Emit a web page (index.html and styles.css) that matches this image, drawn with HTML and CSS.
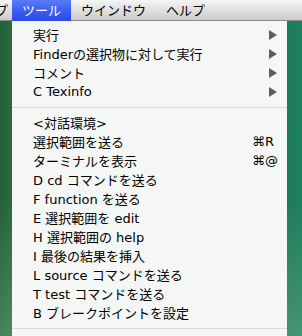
FILE: index.html
```html
<!DOCTYPE html>
<html lang="ja">
<head>
<meta charset="UTF-8">
<title>ツール</title>
<link rel="stylesheet" href="styles.css">
</head>
<body>
<div class="menubar">
  <span class="bar-item cut">プ</span>
  <span class="bar-item active">ツール</span>
  <span class="bar-item">ウインドウ</span>
  <span class="bar-item">ヘルプ</span>
</div>

<div class="menu">
  <div class="row"><span class="label">実行</span><span class="arrow"></span></div>
  <div class="row"><span class="label">Finderの選択物に対して実行</span><span class="arrow"></span></div>
  <div class="row"><span class="label">コメント</span><span class="arrow"></span></div>
  <div class="row"><span class="label">C Texinfo</span><span class="arrow"></span></div>
  <div class="sep"></div>
  <div class="row"><span class="label">&lt;対話環境&gt;</span></div>
  <div class="row"><span class="label">選択範囲を送る</span><span class="key">⌘R</span></div>
  <div class="row"><span class="label">ターミナルを表示</span><span class="key">⌘@</span></div>
  <div class="row"><span class="label">D cd コマンドを送る</span></div>
  <div class="row"><span class="label">F function を送る</span></div>
  <div class="row"><span class="label">E 選択範囲を edit</span></div>
  <div class="row"><span class="label">H 選択範囲の help</span></div>
  <div class="row"><span class="label">I 最後の結果を挿入</span></div>
  <div class="row"><span class="label">L source コマンドを送る</span></div>
  <div class="row"><span class="label">T test コマンドを送る</span></div>
  <div class="row"><span class="label">B ブレークポイントを設定</span></div>
  <div class="sep"></div>
</div>
</body>
</html>
```

FILE: styles.css
```css
html, body {margin: 0; padding: 0;}
body {
  width: 302px; height: 336px; overflow: hidden;
  font: 13px "DejaVu Sans", "Noto Sans CJK JP", sans-serif;
  color: #000;
  background: linear-gradient(to bottom, rgba(255,255,255,0) 60%, rgba(140,190,150,0.35) 100%),
              linear-gradient(to right, #24603a 0, #2b6a40 12px, #1c7a5a 280px, #1f7f5e 302px);
}

.menubar {
  display: flex; height: 21px; align-items: center;
  background: linear-gradient(to bottom, #f5f5f5, #dcdcdc 60%, #cbcbcb);
  border-bottom: 1px solid #8a8a8a;
  box-sizing: border-box;
  font-size: 13px;
}
.bar-item {padding: 0 10px; height: 21px; line-height: 21px; white-space: nowrap;}
.bar-item.cut {padding: 0; width: 12px; overflow: hidden; text-indent: -5px;}
.bar-item.active {
  color: #fff;
  background: linear-gradient(to bottom, #5a7cf8, #3a5ef2 50%, #2a4ce8);
}

.menu {
  margin-left: 12px; width: 275px;
  padding-top: 4px;
  background: #f4f7f6;
  height: 315px;
  box-sizing: border-box;
}
.row {
  display: flex; align-items: center;
  height: 19px; padding: 0 10px 0 21px;
  white-space: nowrap;
}
.label {flex: 1;}
.key {width: 25px;}
.arrow {
  width: 0; height: 0;
  border-left: 8px solid #5e5e5e;
  border-top: 5px solid transparent;
  border-bottom: 5px solid transparent;
}
.sep {height: 12px; display: flex; align-items: center;}
.sep::before {content: ""; flex: 1; height: 1px; background: #d6dad9;}
```
